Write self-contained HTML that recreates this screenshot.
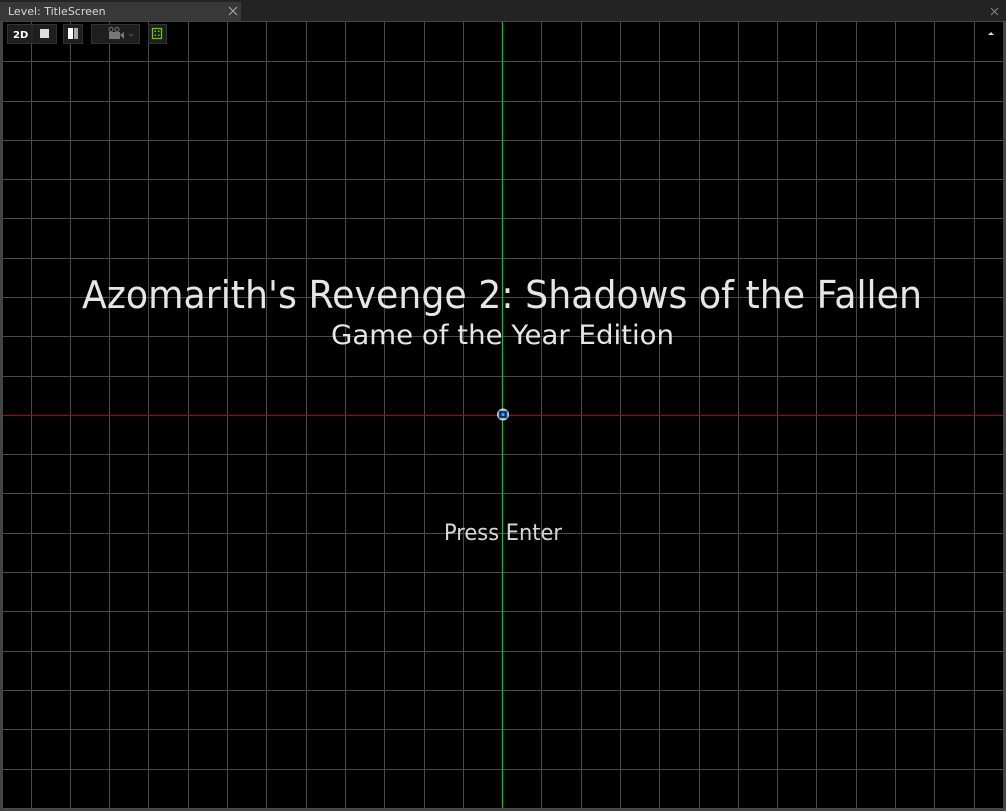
<!DOCTYPE html>
<html><head><meta charset="utf-8"><style>
html,body{margin:0;padding:0;background:#252525;width:1006px;height:811px;overflow:hidden}
svg{display:block}
</style></head><body>
<svg width="1006" height="811" xmlns="http://www.w3.org/2000/svg" font-family="'DejaVu Sans','Liberation Sans',sans-serif">
<rect x="0" y="0" width="1006" height="811" fill="#262626"/>
<rect x="0" y="0" width="1006" height="21" fill="#232323"/>
<rect x="0" y="2" width="241" height="19" fill="#383838"/>
<text x="8" y="15" font-size="11" fill="#d8d8d8">Level: TitleScreen</text>
<path d="M229 7 L237 15 M237 7 L229 15" stroke="#aaa" stroke-width="1"/>
<path d="M991 8 L998 15 M998 8 L991 15" stroke="#888" stroke-width="1"/>
<rect x="0" y="21" width="1006" height="790" fill="#444"/>
<rect x="3" y="22" width="1000" height="786" fill="#000"/>
<g stroke="#4a4a4a" stroke-width="1" id="grid"></g>
<line x1="3" y1="415.5" x2="1003" y2="415.5" stroke="#b00000" stroke-width="1"/>
<g font-size="38" fill="#e6e6e6">
<text x="82" y="308" textLength="840" lengthAdjust="spacingAndGlyphs">Azomarith's Revenge 2: Shadows of the Fallen</text>
<text x="331" y="344" font-size="27" textLength="343" lengthAdjust="spacingAndGlyphs">Game of the Year Edition</text>
<text x="444" y="540" font-size="22" fill="#d8d8d8" textLength="118" lengthAdjust="spacingAndGlyphs">Press Enter</text>
</g>
<line x1="502.5" y1="22" x2="502.5" y2="808" stroke="#00d000" stroke-width="1.2"/>
<circle cx="503" cy="414.5" r="6" fill="#ddd"/>
<rect x="499" y="411" width="8" height="7" fill="#0a2a50" stroke="#2c6fb8"/>
<rect x="501.5" y="413" width="3" height="3" fill="#4aa0ff"/>
<rect x="7.5" y="24.5" width="49" height="19" fill="#1e1e1e" stroke="#333"/>
<line x1="32" y1="24" x2="32" y2="44" stroke="#333"/>
<text x="13" y="38" font-size="10" font-weight="bold" fill="#fff">2D</text>
<rect x="40" y="29" width="9" height="9" fill="#ddd"/>
<rect x="63.5" y="24.5" width="19" height="19" fill="#1e1e1e" stroke="#333"/>
<rect x="68" y="28" width="5" height="11" fill="#fff"/><rect x="74" y="28" width="4" height="11" fill="#aaa"/>
<rect x="91.5" y="24.5" width="48" height="19" fill="#1e1e1e" stroke="#333"/>
<circle cx="111" cy="29.5" r="2" fill="none" stroke="#777"/><circle cx="117" cy="29.5" r="2" fill="none" stroke="#777"/>
<rect x="109" y="32" width="11" height="7" fill="#777"/><path d="M120 35 L124 32 L124 39 Z" fill="#777"/>
<path d="M129 34 L131 36 L133 34" stroke="#555" fill="none"/>
<rect x="148.5" y="24.5" width="18" height="19" fill="#1e1e1e" stroke="#333"/>
<rect x="152.5" y="28.5" width="9" height="10" fill="none" stroke="#6c0" stroke-width="1.2"/>
<rect x="154.5" y="30.5" width="1.5" height="1.5" fill="#6c0"/><rect x="158" y="30.5" width="1.5" height="1.5" fill="#6c0"/>
<rect x="154.5" y="34.5" width="1.5" height="1.5" fill="#6c0"/><rect x="158" y="34.5" width="1.5" height="1.5" fill="#6c0"/>
<path d="M988 35 L991 32 L994 35 Z" fill="#ddd"/>
</svg>
<script>
var g=document.getElementById('grid'),s='';
for(var x=30.6;x<1003;x+=39.29){var xx=Math.round(x)+0.5;if(Math.abs(xx-502.5)<2)continue;s+='<line x1="'+xx+'" y1="22" x2="'+xx+'" y2="808"/>';}
for(var y=61.3;y<808;y+=39.29){var yy=Math.round(y)+0.5;if(Math.abs(yy-415.5)<2)continue;s+='<line x1="3" y1="'+yy+'" x2="1003" y2="'+yy+'"/>';}
g.innerHTML=s;
</script>
</body></html>
